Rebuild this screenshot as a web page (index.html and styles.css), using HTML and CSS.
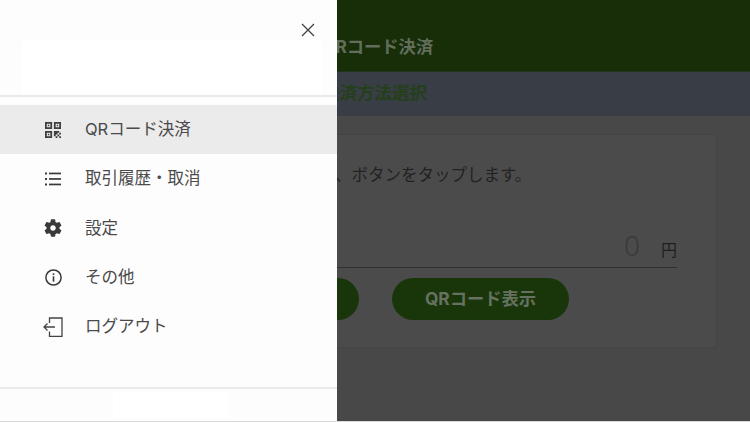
FILE: index.html
```html
<!DOCTYPE html>
<html lang="ja">
<head>
<meta charset="utf-8">
<title>QRコード決済</title>
<link rel="stylesheet" href="styles.css">
</head>
<body>
<div class="stage">
  <main class="page">
    <header class="app-header">QRコード決済</header>
    <div class="sub-bar">決済方法選択</div>
    <section class="card">
      <p class="lead">金額を入力し、ボタンをタップします。</p>
      <div class="amount"><span class="amount-value">0</span><span class="amount-unit">円</span></div>
      <div class="actions">
        <button class="pill">QRコード読取</button>
        <button class="pill">QRコード表示</button>
      </div>
    </section>
  </main>
  <aside class="drawer">
    <div class="drawer-top">
      <button class="close" aria-label="閉じる">
        <svg width="14" height="14" viewBox="0 0 14 14"><path d="M1 1l12 12M13 1L1 13" stroke="#3c3c3c" stroke-width="1.2" fill="none"/></svg>
      </button>
      <div class="logo-blank"></div>
    </div>
    <nav class="menu">
      <a class="item active">
        <span class="ico"><svg width="16" height="16" viewBox="3 3 18 18" fill="#3f3f3f"><path d="M3 11h8V3H3v8zm2-6h4v4H5V5zM3 21h8v-8H3v8zm2-6h4v4H5v-4zM13 3v8h8V3h-8zm6 6h-4V5h4v4zM19 19h2v2h-2zM13 13h4v2h-4zM15 15h2v2h-2zM13 15h2v4h-2zM15 19h2v2h-2zM17 17h2v2h-2zM17 13h2v2h-2zM19 15h2v2h-2zM6.200 6.200h1.600v1.600h-1.600zM16.200 6.200h1.600v1.600h-1.600zM6.200 16.200h1.600v1.600h-1.600z"/></svg></span>
        <span class="label">QRコード決済</span>
      </a>
      <a class="item">
        <span class="ico"><svg width="16" height="16" viewBox="0 0 16 16" fill="#3a3a3a"><rect x="0" y="1.500" width="2" height="2"/><rect x="0" y="7" width="2" height="2"/><rect x="0" y="12.500" width="2" height="2"/><rect x="4" y="1.600" width="12" height="1.700"/><rect x="4" y="7.100" width="12" height="1.700"/><rect x="4" y="12.600" width="12" height="1.700"/></svg></span>
        <span class="label">取引履歴・取消</span>
      </a>
      <a class="item">
        <span class="ico"><svg width="18" height="18" viewBox="2 2 20 20" fill="#3a3a3a"><path d="M19.140 12.940c.04-.3.06-.61.06-.94 0-.32-.02-.64-.07-.94l2.030-1.580c.18-.14.23-.41.12-.61l-1.920-3.320c-.12-.22-.37-.29-.59-.22l-2.390.96c-.5-.38-1.030-.7-1.620-.94l-.36-2.540c-.04-.24-.24-.41-.48-.41h-3.840c-.24 0-.43.17-.47.41l-.36 2.540c-.59.24-1.130.57-1.620.94l-2.390-.96c-.22-.08-.47 0-.59.22L2.740 8.870c-.12.21-.08.47.12.61l2.030 1.580c-.05.3-.09.63-.09.94s.02.64.07.94l-2.030 1.580c-.18.14-.23.41-.12.61l1.920 3.320c.12.22.37.29.59.22l2.390-.96c.5.38 1.030.7 1.620.94l.36 2.540c.05.24.24.41.48.41h3.840c.24 0 .44-.17.47-.41l.36-2.540c.59-.24 1.130-.56 1.620-.94l2.390.96c.22.08.47 0 .59-.22l1.920-3.320c.12-.22.07-.47-.12-.61l-2.010-1.580zM12 15.100c-1.710 0-3.100-1.390-3.100-3.100s1.390-3.100 3.100-3.100 3.100 1.390 3.100 3.100-1.390 3.100-3.100 3.100z"/></svg></span>
        <span class="label">設定</span>
      </a>
      <a class="item">
        <span class="ico"><svg width="17" height="17" viewBox="0 0 17 17"><circle cx="8.500" cy="8.500" r="7.600" fill="none" stroke="#3a3a3a" stroke-width="1.500"/><rect x="7.700" y="4.300" width="1.600" height="1.700" fill="#3a3a3a"/><rect x="7.700" y="7.300" width="1.600" height="5.400" fill="#3a3a3a"/></svg></span>
        <span class="label">その他</span>
      </a>
      <a class="item">
        <span class="ico"><svg width="20" height="20" viewBox="0 0 20 20" fill="none" stroke="#444" stroke-width="1.300"><path d="M6.500 6V1h12.500v18.500H6.500V14.500"/><path d="M1 10h11M4.500 6.500L1 10l3.500 3.500"/></svg></span>
        <span class="label">ログアウト</span>
      </a>
    </nav>
    <div class="drawer-foot"><div class="foot-blank"></div></div>
  </aside>
</div>
</body>
</html>
```
FILE: styles.css
```css
* { box-sizing: border-box; }
html, body { margin: 0; padding: 0; }
body {
  width: 750px;
  height: 422px;
  overflow: hidden;
  background: #d9d9d9;
  font-family: Inter, "Noto Sans CJK JP", "Noto Sans", sans-serif;
}
.stage {
  position: relative;
  width: 750px;
  height: 421px;
  overflow: hidden;
}
.page {
  height: 421px;
  background: #484848;
  display: flex;
  flex-direction: column;
}
.app-header {
  height: 72px;
  padding: 35px 0 0 322px;
  background: #172e09;
  border-bottom: 1px solid #223419;
  color: #626d5b;
  font-size: 17.300px;
  font-weight: 700;
  line-height: 24px;
}
.sub-bar {
  height: 44px;
  padding-left: 322px;
  background: #393d46;
  color: #24401a;
  font-size: 17.500px;
  font-weight: 700;
  line-height: 41px;
}
.card {
  width: 684px;
  height: 214px;
  margin: 18px 0 0 33px;
  padding: 27px 39px 0 202px;
  background: #4b4b4b;
  border: 1px solid #444;
  border-radius: 2px;
}
.lead {
  margin: 0;
  color: #222;
  font-size: 16.500px;
  line-height: 26px;
  white-space: nowrap;
}
.amount {
  display: flex;
  justify-content: flex-end;
  align-items: baseline;
  height: 37px;
  margin-top: 43px;
  border-bottom: 1px solid #303030;
  line-height: 29px;
}
.amount-value {
  color: #3a3a3a;
  font-size: 28px;
  font-weight: 300;
  font-family: "Noto Sans", sans-serif;
}
.amount-unit {
  margin-left: 21px;
  color: #1f1f1f;
  font-size: 16px;
}
.actions {
  display: flex;
  gap: 33px;
  margin: 10px 0 0 -54px;
}
.pill {
  width: 177px;
  height: 42px;
  padding: 0 0 3px;
  border: 0;
  border-radius: 21px;
  background: #19360b;
  color: #667160;
  font: 700 17.300px Inter, "Noto Sans CJK JP", "Noto Sans", sans-serif;
}
.drawer {
  position: absolute;
  top: 0;
  left: 0;
  width: 337px;
  height: 421px;
  background: #fdfdfd;
  display: flex;
  flex-direction: column;
}
.drawer-top {
  height: 97px;
  padding: 23px 22px 0;
  border-bottom: 2px solid #e9e9e9;
  display: flex;
  flex-direction: column;
}
.close {
  align-self: flex-end;
  width: 14px;
  height: 14px;
  padding: 0;
  border: 0;
  background: none;
  display: flex;
}
.logo-blank {
  height: 53px;
  margin: 4px -7px 0 0;
  background: #fff;
}
.menu {
  height: 290px;
  padding-top: 8px;
  display: flex;
  flex-direction: column;
}
.item {
  height: 49.300px;
  flex: none;
  padding-left: 43px;
  display: flex;
  align-items: center;
  color: #4a4a4a;
  font-size: 16.500px;
}
.item.active { background: #ebebeb; }
.label { padding-bottom: 3px; }
.ico {
  width: 20px;
  margin-right: 22px;
  display: flex;
  justify-content: center;
}
.drawer-foot {
  flex: 1;
  border-top: 2px solid #e9e9e9;
  padding: 3px 0 0 113px;
}
.foot-blank {
  width: 115px;
  height: 26px;
  background: #fff;
}
```
